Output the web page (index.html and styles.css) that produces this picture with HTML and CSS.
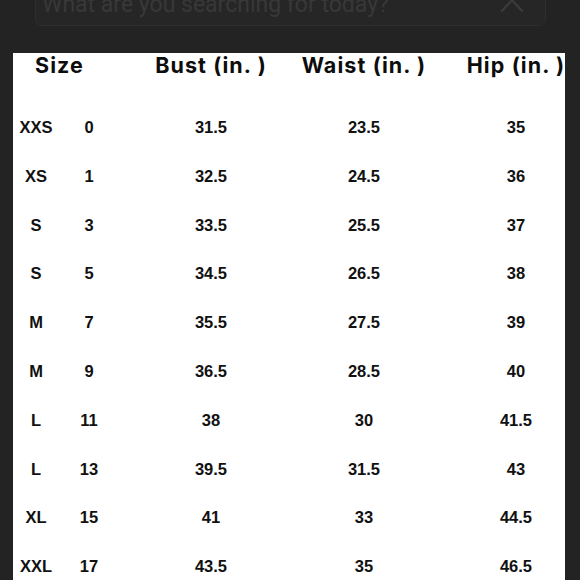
FILE: index.html
```html
<!DOCTYPE html>
<html>
<head>
<meta charset="utf-8">
<link rel="stylesheet" href="styles.css">
</head>
<body>
<div class="topbar">
  <div class="search">
    <span class="placeholder">What are you searching for today?</span>
    <svg class="close" width="24" height="24" viewBox="0 0 24 24"><path d="M2 1 L22 23 M22 1 L2 23" stroke="#3b3b3b" stroke-width="2.2" fill="none" stroke-linecap="round"/></svg>
  </div>
</div>
<div class="panel">
  <div class="chart">
    <div class="hd hd-size">Size</div>
    <div class="hd">Bust (in. )</div>
    <div class="hd">Waist (in. )</div>
    <div class="hd">Hip (in. )</div>

    <div class="c">XXS</div><div class="c">0</div><div class="c">31.5</div><div class="c">23.5</div><div class="c">35</div>
    <div class="c">XS</div><div class="c">1</div><div class="c">32.5</div><div class="c">24.5</div><div class="c">36</div>
    <div class="c">S</div><div class="c">3</div><div class="c">33.5</div><div class="c">25.5</div><div class="c">37</div>
    <div class="c">S</div><div class="c">5</div><div class="c">34.5</div><div class="c">26.5</div><div class="c">38</div>
    <div class="c">M</div><div class="c">7</div><div class="c">35.5</div><div class="c">27.5</div><div class="c">39</div>
    <div class="c">M</div><div class="c">9</div><div class="c">36.5</div><div class="c">28.5</div><div class="c">40</div>
    <div class="c">L</div><div class="c">11</div><div class="c">38</div><div class="c">30</div><div class="c">41.5</div>
    <div class="c">L</div><div class="c">13</div><div class="c">39.5</div><div class="c">31.5</div><div class="c">43</div>
    <div class="c">XL</div><div class="c">15</div><div class="c">41</div><div class="c">33</div><div class="c">44.5</div>
    <div class="c">XXL</div><div class="c">17</div><div class="c">43.5</div><div class="c">35</div><div class="c">46.5</div>
  </div>
</div>
</body>
</html>
```

FILE: styles.css
```css
html, body {
  margin: 0;
  padding: 0;
  background: #232323;
  height: 580px;
  overflow: hidden;
}

.topbar {
  height: 53px;
  padding: 0 34px 0 35px;
  box-sizing: border-box;
  display: flex;
  flex-direction: column;
}

.search {
  height: 56px;
  flex: none;
  margin-top: -30px;
  box-sizing: border-box;
  border: 1px solid #2e2e2e;
  border-radius: 7px;
  background: #262626;
  display: flex;
  align-items: flex-end;
  justify-content: space-between;
  padding: 0 21px 8px 6px;
}

.placeholder {
  font-family: Roboto, "Liberation Sans", sans-serif;
  font-size: 23px;
  line-height: 24px;
  color: #383838;
  white-space: nowrap;
}

.close {
  display: block;
  margin-bottom: 5px;
}

.panel {
  margin: 0 15px 0 13px;
  background: #ffffff;
  height: 527px;
  overflow: hidden;
}

.chart {
  display: grid;
  grid-template-columns: 46px 60px 184px 122px 182px;
  grid-template-rows: 49.6px;
  grid-auto-rows: 48.8px;
  justify-items: center;
  align-items: center;
  width: 594px;
  color: #111;
}

.hd {
  align-self: start;
  font-family: Inter, "Noto Sans", sans-serif;
  font-weight: 700;
  font-size: 21.5px;
  line-height: 24px;
  letter-spacing: 1.1px;
  white-space: nowrap;
  color: #0d0d0d;
}

.hd-size {
  grid-column: 1 / span 2;
  justify-self: start;
  padding-left: 22px;
}

.c {
  font-family: "Liberation Sans", Arial, sans-serif;
  font-weight: 700;
  font-size: 16.5px;
  line-height: 20px;
}
```
